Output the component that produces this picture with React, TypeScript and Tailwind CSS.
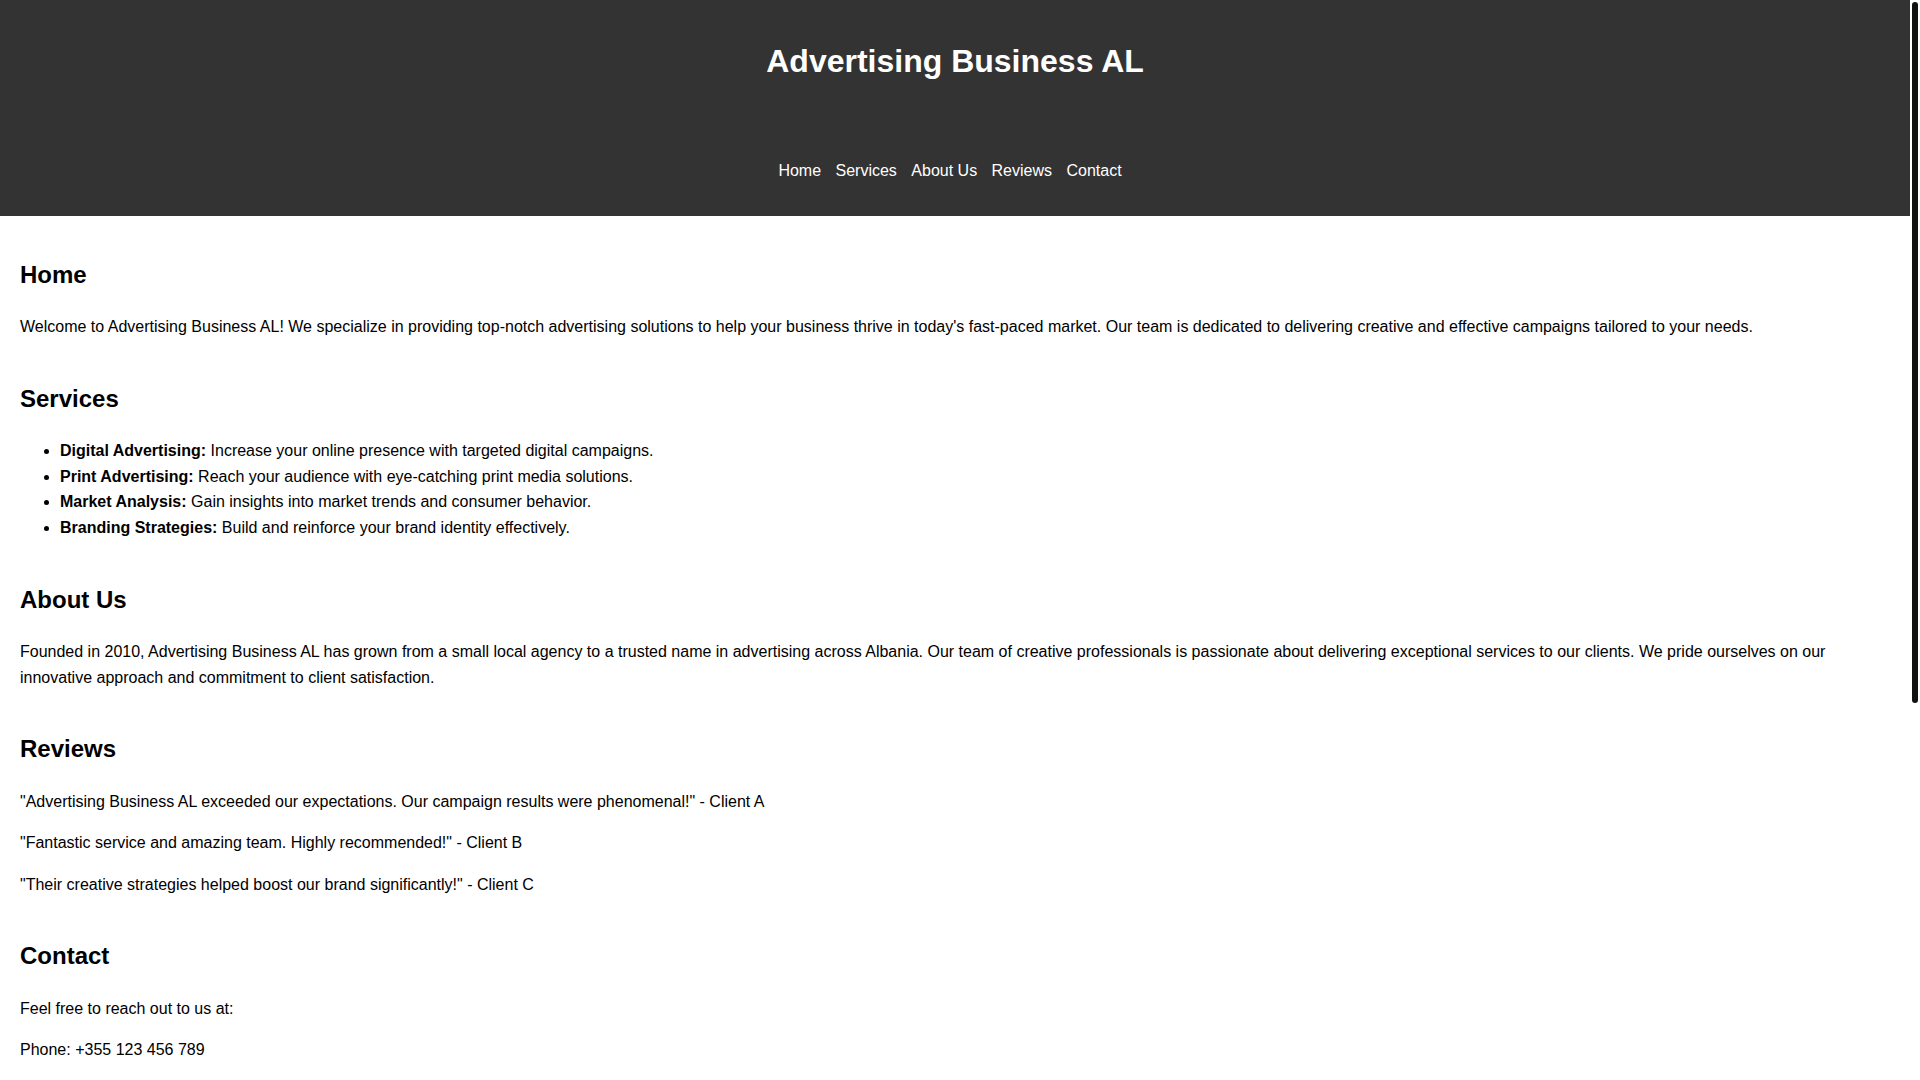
const links = ['Home', 'Services', 'About Us', 'Reviews', 'Contact'];

const services = [
  { name: 'Digital Advertising:', text: 'Increase your online presence with targeted digital campaigns.' },
  { name: 'Print Advertising:', text: 'Reach your audience with eye-catching print media solutions.' },
  { name: 'Market Analysis:', text: 'Gain insights into market trends and consumer behavior.' },
  { name: 'Branding Strategies:', text: 'Build and reinforce your brand identity effectively.' },
];

const reviews = [
  '"Advertising Business AL exceeded our expectations. Our campaign results were phenomenal!" - Client A',
  '"Fantastic service and amazing team. Highly recommended!" - Client B',
  '"Their creative strategies helped boost our brand significantly!" - Client C',
];

function Section({ title, children }: { title: string; children: React.ReactNode }) {
  return (
    <section id={title.toLowerCase().replace(' ', '-')} className="flex flex-col">
      <h2 className="text-2xl font-bold leading-[1.6]">{title}</h2>
      <div className="mt-5 flex flex-col gap-4">{children}</div>
    </section>
  );
}

export default function App() {
  return (
    <div className="min-h-screen bg-white font-['Liberation_Sans',Arial,sans-serif] text-base leading-[1.6] text-black">
      <div className="mr-[10px]">
        <header className="flex flex-col items-center bg-[#333] pt-9 pb-8 text-white">
          <h1 className="text-[32px] font-bold leading-[1.6]">Advertising Business AL</h1>
          <nav className="mt-[71px]">
            <ul className="flex gap-[4.45px]">
              {links.map((l) => (
                <li key={l} className="mr-[10px]">
                  <a href={'#' + l.toLowerCase().replace(' ', '-')} className="text-white">
                    {l}
                  </a>
                </li>
              ))}
            </ul>
          </nav>
        </header>

        <main className="flex flex-col gap-10 px-5 pt-10">
          <Section title="Home">
            <p>
              Welcome to Advertising Business AL! We specialize in providing top-notch advertising solutions to help your
              business thrive in today's fast-paced market. Our team is dedicated to delivering creative and effective
              campaigns tailored to your needs.
            </p>
          </Section>

          <Section title="Services">
            <ul className="list-disc pl-10">
              {services.map((s) => (
                <li key={s.name}>
                  <strong className="font-bold">{s.name}</strong> {s.text}
                </li>
              ))}
            </ul>
          </Section>

          <Section title="About Us">
            <p>
              Founded in 2010, Advertising Business AL has grown from a small local agency to a trusted name in
              advertising across Albania. Our team of creative professionals is passionate about delivering exceptional
              services to our clients. We pride ourselves on our innovative approach and commitment to client
              satisfaction.
            </p>
          </Section>

          <Section title="Reviews">
            {reviews.map((r) => (
              <p key={r}>{r}</p>
            ))}
          </Section>

          <Section title="Contact">
            <p>Feel free to reach out to us at:</p>
            <p>Phone: +355 123 456 789</p>
            <p>Email: info@advertisingbusinessal.com</p>
            <p>Address: Rruga e Durrësit, Tirana, Albania</p>
            <form className="flex max-w-[500px] flex-col gap-2.5" onSubmit={(e) => e.preventDefault()}>
              <label htmlFor="name">Name:</label>
              <input id="name" type="text" className="border border-[#ccc] p-2.5" />
              <label htmlFor="email">Email:</label>
              <input id="email" type="email" className="border border-[#ccc] p-2.5" />
              <label htmlFor="message">Message:</label>
              <textarea id="message" className="h-[120px] border border-[#ccc] p-2.5" />
              <button type="submit" className="self-start bg-[#333] px-5 py-2.5 text-white">
                Send Message
              </button>
            </form>
          </Section>
        </main>

        <footer className="mt-10 bg-[#333] p-5 text-center text-white">
          <p>&copy; 2024 Advertising Business AL. All rights reserved.</p>
        </footer>
      </div>

      {/* page scrollbar */}
      <div className="fixed top-0 right-0 h-screen w-[10px] bg-white">
        <div className="ml-[2px] mt-[2px] h-[701px] w-[6px] rounded-full bg-[#111]" />
      </div>
    </div>
  );
}
